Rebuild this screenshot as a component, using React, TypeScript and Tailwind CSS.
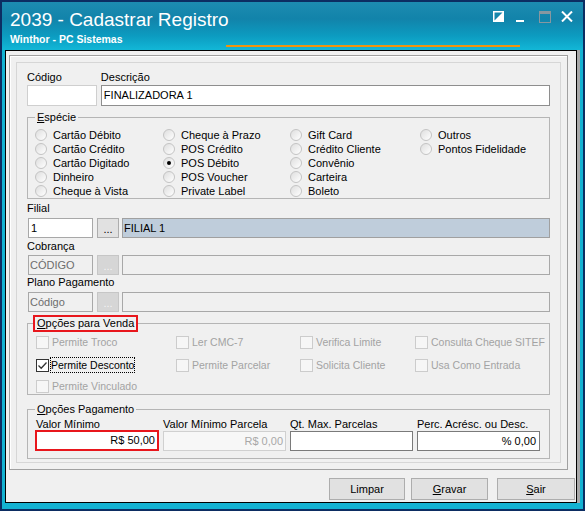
import React from "react";

type RadioProps = { label: string; checked?: boolean };

const Radio = ({ label, checked }: RadioProps) => (
  <div className="flex h-[14px] items-center whitespace-nowrap">
    <span className="flex h-[12px] w-[12px] items-center justify-center rounded-full border border-[#c4c4c4] bg-[linear-gradient(135deg,#dedede,#ffffff)]">
      {checked && <span className="h-[4px] w-[4px] rounded-full bg-black" />}
    </span>
    <span className="ml-[6px]">{label}</span>
  </div>
);

type CheckProps = { label: string; checked?: boolean; enabled?: boolean };

const Check = ({ label, checked, enabled }: CheckProps) => (
  <div className="flex h-[16px] items-center whitespace-nowrap text-[10.5px]">
    <span
      className={
        enabled
          ? "flex h-[13px] w-[13px] shrink-0 items-center justify-center border border-[#333333] bg-white"
          : "h-[13px] w-[13px] shrink-0 border border-[#cccccc] bg-[#f6f6f6]"
      }
    >
      {checked && (
        <svg width="11" height="11" viewBox="0 0 11 11">
          <path d="M1.5 5.5 L4.2 8.2 L9.5 2.5" fill="none" stroke="#333" strokeWidth="1.3" />
        </svg>
      )}
    </span>
    {enabled ? (
      <span className="ml-px border border-dotted border-black leading-[14px] text-black">{label}</span>
    ) : (
      <span className="ml-[3px] text-[#a3a3a3]">{label}</span>
    )}
  </div>
);

const Button = ({ children, className }: { children: React.ReactNode; className?: string }) => (
  <div
    className={
      "flex h-[22px] items-center justify-center border border-[#adadad] bg-[#e1e1e1] text-black " +
      (className ?? "")
    }
  >
    {children}
  </div>
);

const WindowControls = () => (
  <div className="mt-[2px] flex items-start">
    <svg width="11" height="11" viewBox="0 0 11 11">
      <rect x="0.75" y="0.75" width="9.5" height="9.5" fill="none" stroke="#fff" strokeWidth="1.5" />
      <path d="M0.75 10.25 L10.25 0.75 L10.25 10.25 Z" fill="#fff" />
    </svg>
    <svg className="ml-[12px] mt-[9px]" width="8" height="2" viewBox="0 0 8 2">
      <rect width="8" height="2" fill="#fff" />
    </svg>
    <svg className="ml-[15px]" width="12" height="12" viewBox="0 0 12 12">
      <rect x="0.5" y="0.5" width="11" height="11" fill="none" stroke="#8797a0" />
      <rect x="0.5" y="0.5" width="11" height="2.5" fill="#8797a0" />
    </svg>
    <svg className="ml-[10px]" width="12" height="11" viewBox="0 0 12 11">
      <path d="M1 0.5 L11 10.5 M11 0.5 L1 10.5" stroke="#fff" strokeWidth="2" />
    </svg>
  </div>
);

export default function App() {
  return (
    <div className="flex h-[511px] w-[585px] flex-col border-2 border-[#0c2d62] bg-[#13b2d2] font-['Liberation_Sans',Arial,sans-serif] text-[11px] leading-[13px] text-black">
      {/* title bar */}
      <div className="h-[48px] shrink-0 bg-[linear-gradient(180deg,#1d8cb1_0%,#1283aa_35%,#0c9bc0_70%,#12b7d7_100%)] pl-[8px] pr-[10px] pt-[7px]">
        <div className="flex items-start justify-between">
          <div className="text-[19px] leading-[22px] text-white">2039 - Cadastrar Registro</div>
          <WindowControls />
        </div>
        <div className="mt-[2px] flex h-[14px] items-end">
          <div className="w-[216px] self-start text-[10.5px] font-bold leading-[13px] text-white">
            Winthor - PC Sistemas
          </div>
          <div className="h-[2px] w-[294px] bg-[#f0940f]" />
        </div>
      </div>

      {/* client area */}
      <div className="mb-[6px] ml-[3px] mr-[6px] flex flex-1 flex-col border border-black bg-[#f0f0f0] shadow-[3px_0_0_#a8a8a8]">
        <div className="ml-[3px] mr-[8px] mt-[4px] border border-[#a0a0a0] p-[6px] shadow-[inset_1px_1px_0_#ffffff]">
          <div className="border border-[#d6d6d6] px-[10px] pb-[3px] pt-[8px]">
            {/* Código / Descrição */}
            <div className="flex">
              <div className="w-[70px]">
                <div>Código</div>
                <div className="mt-px h-[21px] border border-[#cfcfcf] bg-white" />
              </div>
              <div className="ml-[4px] w-[450px]">
                <div>Descrição</div>
                <div className="mt-px h-[21px] border border-[#8e8e8e] bg-white pl-[2px] leading-[19px]">
                  FINALIZADORA 1
                </div>
              </div>
            </div>

            {/* Espécie */}
            <fieldset className="mt-[5px] min-w-0 border border-[#b5b5b5]">
              <legend className="ml-[7px] px-[2px]">
                <span className="underline">E</span>spécie
              </legend>
              <div className="grid grid-flow-col grid-cols-[128px_127px_130px_1fr] grid-rows-5 pl-[7px] pt-[4px]">
                <Radio label="Cartão Débito" />
                <Radio label="Cartão Crédito" />
                <Radio label="Cartão Digitado" />
                <Radio label="Dinheiro" />
                <Radio label="Cheque à Vista" />
                <Radio label="Cheque à Prazo" />
                <Radio label="POS Crédito" />
                <Radio label="POS Débito" checked />
                <Radio label="POS Voucher" />
                <Radio label="Private Label" />
                <Radio label="Gift Card" />
                <Radio label="Crédito Cliente" />
                <Radio label="Convênio" />
                <Radio label="Carteira" />
                <Radio label="Boleto" />
                <Radio label="Outros" />
                <Radio label="Pontos Fidelidade" />
              </div>
            </fieldset>

            {/* Filial */}
            <div className="mt-[3px]">Filial</div>
            <div className="ml-px mt-[3px] flex h-[20px]">
              <div className="w-[65px] border border-[#a8a8a8] bg-white pl-[2px] leading-[18px]">1</div>
              <div className="ml-[4px] w-[22px] border border-[#adadad] bg-[#e1e1e1] text-center leading-[20px]">...</div>
              <div className="ml-[3px] w-[428px] border border-[#a0a0a0] bg-[#bfcddb] pl-[1px] leading-[18px]">FILIAL 1</div>
            </div>

            {/* Cobrança */}
            <div className="mt-[2px]">Cobrança</div>
            <div className="ml-px mt-[2px] flex h-[20px]">
              <div className="w-[65px] border border-[#a8a8a8] pl-[1px] leading-[18px] text-[#6d6d6d]">CÓDIGO</div>
              <div className="ml-[4px] w-[22px] border border-[#c6c6c6] bg-[#d6d6d6] text-center leading-[20px] text-[#f4f4f4]">...</div>
              <div className="ml-[3px] w-[428px] border border-[#a8a8a8]" />
            </div>

            {/* Plano Pagamento */}
            <div className="mt-px">Plano Pagamento</div>
            <div className="ml-px mt-[3px] flex h-[20px]">
              <div className="w-[65px] border border-[#a8a8a8] pl-[1px] leading-[18px] text-[#6d6d6d]">Código</div>
              <div className="ml-[4px] w-[22px] border border-[#c6c6c6] bg-[#d6d6d6] text-center leading-[20px] text-[#f4f4f4]">...</div>
              <div className="ml-[3px] w-[428px] border border-[#a8a8a8]" />
            </div>

            {/* Opções para Venda */}
            <fieldset className="mt-[3px] min-w-0 border border-[#b5b5b5]">
              <legend className="ml-[5px] border-2 border-[#e8161c] px-[2px]">
                <span className="underline">O</span>pções para Venda
              </legend>
              <div className="pl-[8px] pt-[2px]">
                <div className="grid grid-cols-[140px_124px_115px_1fr]">
                  <Check label="Permite Troco" />
                  <Check label="Ler CMC-7" />
                  <Check label="Verifica Limite" />
                  <Check label="Consulta Cheque SITEF" />
                </div>
                <div className="mt-[7px] grid grid-cols-[140px_124px_115px_1fr]">
                  <Check label="Permite Desconto" checked enabled />
                  <Check label="Permite Parcelar" />
                  <Check label="Solicita Cliente" />
                  <Check label="Usa Como Entrada" />
                </div>
                <div className="mt-[5px]">
                  <Check label="Permite Vinculado" />
                </div>
              </div>
            </fieldset>

            {/* Opções Pagamento */}
            <fieldset className="mt-[8px] min-w-0 border border-[#b5b5b5]">
              <legend className="ml-[7px] px-[2px]">
                <span className="underline">O</span>pções Pagamento
              </legend>
              <div className="grid grid-cols-[124px_123px_123px_123px] gap-x-[4px] pb-[7px] pl-[7px] pt-[2px]">
                <div className="pl-px">Valor Mínimo</div>
                <div>Valor Mínimo Parcela</div>
                <div>Qt. Max. Parcelas</div>
                <div>Perc. Acrésc. ou Desc.</div>
                <div className="-mt-px h-[21px] border-2 border-[#e8161c] bg-white pr-[2px] text-right leading-[17px]">
                  R$ 50,00
                </div>
                <div className="h-[20px] border border-[#d0d0d0] bg-[#f7f7f7] pr-[2px] text-right leading-[18px] text-[#a8a8a8]">
                  R$ 0,00
                </div>
                <div className="h-[20px] border border-[#7a7a7a] bg-white" />
                <div className="h-[20px] border border-[#7a7a7a] bg-white pr-[3px] text-right leading-[18px]">
                  % 0,00
                </div>
              </div>
            </fieldset>
          </div>
        </div>

        {/* buttons */}
        <div className="mt-[8px] flex justify-end pr-[1px]">
          <Button className="w-[76px]">Limpar</Button>
          <Button className="ml-[6px] w-[77px]">
            <span className="underline">G</span>ravar
          </Button>
          <Button className="ml-[9px] w-[78px]">
            <span className="underline">S</span>air
          </Button>
        </div>
      </div>
    </div>
  );
}
